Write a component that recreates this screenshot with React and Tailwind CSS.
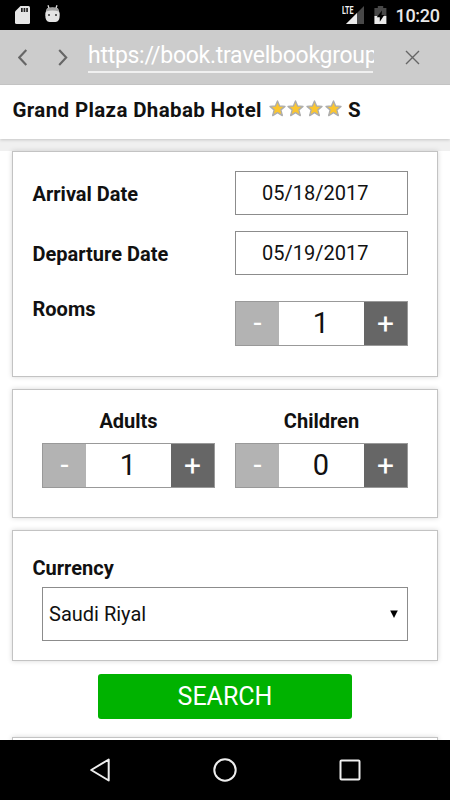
import { useState } from "react";

function StatusBar() {
    return (
        <div className="flex h-[30px] shrink-0 items-start bg-black pl-[15px]">
            <svg className="mt-[6px] h-[18px] w-[15px]" viewBox="0 0 15 18">
                <path
                    d="M5.5 0H13.5Q15 0 15 1.5V16.5Q15 18 13.5 18H1.5Q0 18 0 16.5V5.5Z"
                    fill="#e6e6e6"
                />
                <path d="M6 2h1.7v4H6zM8.6 2h1.7v4H8.6zM11.2 2h1.7v4h-1.7z" fill="#222" />
            </svg>
            <svg className="mt-[5px] ml-[15px] h-[18px] w-[15px]" viewBox="0 0 15 18">
                <path d="M3 0.2L4.3 4M12 0.2L10.7 4" stroke="#ddd" strokeWidth="1.3" />
                <path
                    d="M2 3.5Q7.5 1.6 13 3.5L14.6 8Q15.4 17 10.5 17H4.5Q-0.4 17 0.4 8Z"
                    fill="#e3e3e3"
                />
                <path d="M2 3.5Q7.5 1.6 13 3.5L14 6.4Q7.5 4.8 1 6.4Z" fill="#a3a3a3" />
                <circle cx="4" cy="10" r="1" fill="#333" />
                <circle cx="11" cy="10" r="1" fill="#333" />
            </svg>
            <div className="relative mt-[6px] ml-[282px] h-[18px] w-[22px]">
                <svg className="h-[18px] w-[22px]" viewBox="0 0 22 18">
                    <path d="M22 0V18H4Z" fill="#484848" />
                    <path d="M15 7V18H4Z" fill="#ebebeb" />
                    <path d="M0 0H11.5V8.6H0Z" fill="#000" />
                </svg>
                <svg className="absolute -top-[4px] left-0 h-[18px] w-[14px]" viewBox="0 0 14 18">
                    <text
                        x="0"
                        y="12"
                        fontSize="11"
                        fontWeight="700"
                        fontFamily="Roboto, sans-serif"
                        textLength="11.5"
                        lengthAdjust="spacingAndGlyphs"
                        fill="#f2f2f2"
                    >
                        LTE
                    </text>
                </svg>
            </div>
            <svg className="mt-[6px] ml-[10px] h-[18px] w-[13px]" viewBox="0 0 13 18">
                <path d="M3.8 0H9.2V2H12.4V10H0.4V2H3.8Z" fill="#484848" />
                <path d="M0.4 10H12.4V18H0.4Z" fill="#ebebeb" />
                <path d="M8 4.5L2.7 11.2H5.8V15.8L10.3 9H7.6Z" fill="#000" />
            </svg>
            <span className="mt-[5px] ml-[8.5px] text-[18px] leading-[21px] font-medium tracking-[-0.3px] text-[#e8e8e8]">
                10:20
            </span>
        </div>
    );
}

function BrowserBar() {
    return (
        <div className="flex h-[55px] shrink-0 items-start border-b border-[#c3c3c3] bg-[#ccc]">
            <svg className="mt-[19px] ml-[18px] h-[17px] w-[10px]" viewBox="0 0 10 17">
                <path d="M8.3 1L1.3 8.5L8.3 16" fill="none" stroke="#666" strokeWidth="2.1" />
            </svg>
            <svg className="mt-[19px] ml-[30px] h-[17px] w-[10px]" viewBox="0 0 10 17">
                <path d="M1.2 1L8.2 8.5L1.2 16" fill="none" stroke="#666" strokeWidth="2.1" />
            </svg>
            <div className="mt-[8px] ml-[20px] h-[35px] w-[285px] border-b-2 border-[#f0f0f0]">
                <div className="w-[286px] overflow-hidden text-[23px] leading-[35px] tracking-[-0.28px] whitespace-nowrap text-white">
                    https://book.travelbookgroup
                </div>
            </div>
            <svg className="mt-[20px] ml-[32px] h-[15px] w-[15px]" viewBox="0 0 15 15">
                <path d="M1 1L14 14M14 1L1 14" stroke="#666" strokeWidth="1.4" />
            </svg>
        </div>
    );
}

function Star() {
    return (
        <svg className="h-[17px] w-[17px]" viewBox="0 0 17 17">
            <path
                d="M8.5 1L10.6 6L16 6.4L11.9 9.9L13.3 15.6L8.5 12.6L3.7 15.6L5.1 9.9L1 6.4L6.4 6Z"
                fill="#fbc62f"
                stroke="#adadad"
                strokeWidth="1.4"
                strokeLinejoin="round"
            />
        </svg>
    );
}

function Card({ className, children }) {
    return (
        <section
            className={`mx-[12px] shrink-0 border border-[#c3c3c3] bg-white shadow-[0_0_5px_rgba(0,0,0,0.16)] ${className}`}
        >
            {children}
        </section>
    );
}

function DateField({ value }) {
    return (
        <div className="h-[44px] w-[173px] border border-[#8c8c8c] pl-[26px] text-[20px] leading-[43px] text-[#111]">
            {value}
        </div>
    );
}

function Stepper({ initial, min }) {
    const [count, setCount] = useState(initial);

    return (
        <div className="flex h-[45px] w-[173px] border border-[#999] leading-[43px]">
            <button
                className="w-[43px] bg-[#b3b3b3] text-center text-[29px] text-white"
                onClick={() => setCount(Math.max(min, count - 1))}
            >
                -
            </button>
            <span className="flex-1 pr-[1px] text-center text-[29px] leading-[42px] text-[#111]">
                {count}
            </span>
            <button
                className="w-[43px] bg-[#666] text-center text-[30px] text-white"
                onClick={() => setCount(count + 1)}
            >
                +
            </button>
        </div>
    );
}

function NavBar() {
    return (
        <div className="flex h-[60px] shrink-0 items-center bg-black pl-[89px]">
            <svg className="h-[26px] w-[22px]" viewBox="0 0 22 26">
                <path
                    d="M19.7 2.5V23.5L2.2 13Z"
                    fill="none"
                    stroke="#eee"
                    strokeWidth="2"
                    strokeLinejoin="round"
                />
            </svg>
            <svg className="ml-[101px] h-[26px] w-[26px]" viewBox="0 0 26 26">
                <circle cx="13" cy="13" r="10.7" fill="none" stroke="#eee" strokeWidth="2" />
            </svg>
            <svg className="ml-[101px] h-[22px] w-[22px]" viewBox="0 0 22 22">
                <rect x="1.5" y="1.5" width="19" height="19" rx="1" fill="none" stroke="#eee" strokeWidth="2" />
            </svg>
        </div>
    );
}

export default function App() {
    return (
        <div className="flex h-[800px] w-[450px] flex-col overflow-hidden bg-white font-[Roboto,sans-serif] text-[#111]">
            <StatusBar />
            <BrowserBar />
            <main className="flex min-h-0 flex-1 flex-col overflow-hidden">
                <header className="z-10 flex h-[54px] shrink-0 bg-white pl-[12.5px] text-[20.5px] leading-[51px] font-bold shadow-[0_1px_3px_rgba(0,0,0,0.18)]">
                    <h1 className="w-[250px] tracking-[0.36px] whitespace-nowrap">Grand Plaza Dhabab Hotel</h1>
                    <div className="mt-[15px] ml-[6px] flex gap-[1.8px]">
                        <Star />
                        <Star />
                        <Star />
                        <Star />
                    </div>
                    <span className="ml-[6px]">S</span>
                </header>
                <div className="h-[12px] shrink-0 bg-[#f0f0f0]" />

                <Card className="h-[226px] pt-[19px] pr-[29px] pl-[19.5px]">
                    <div className="flex justify-between">
                        <span className="text-[20px] leading-[47px] font-bold">Arrival Date</span>
                        <DateField value="05/18/2017" />
                    </div>
                    <div className="mt-[13px] flex justify-between">
                        <span className="text-[20px] leading-[47px] font-bold">Departure Date</span>
                        <DateField value="05/19/2017" />
                    </div>
                    <div className="mt-[23px] flex justify-between">
                        <span className="text-[20px] leading-[17px] font-bold">Rooms</span>
                        <Stepper initial={1} min={1} />
                    </div>
                </Card>

                <Card className="mt-[12px] flex h-[129px] justify-between pt-[18px] pr-[29px] pl-[29px]">
                    <div className="text-center">
                        <div className="h-[35px] text-[20px] leading-[26px] font-bold">Adults</div>
                        <Stepper initial={1} min={1} />
                    </div>
                    <div className="text-center">
                        <div className="h-[35px] text-[20px] leading-[26px] font-bold">Children</div>
                        <Stepper initial={0} min={0} />
                    </div>
                </Card>

                <Card className="mt-[12px] h-[131px] pt-[24px] pr-[29px] pl-[19.5px]">
                    <div className="text-[20px] leading-[26px] font-bold">Currency</div>
                    <div className="mt-[6px] ml-[9.5px] flex h-[54px] items-center justify-between border border-[#8c8c8c] pr-[9px] pl-[6px] text-[20px]">
                        Saudi Riyal
                        <svg className="mb-[1px] h-[8px] w-[8px]" viewBox="0 0 8 8">
                            <path d="M0.2 0.5H7.8L4 8Z" fill="#000" />
                        </svg>
                    </div>
                </Card>

                <button className="mt-[13px] ml-[98px] h-[45px] w-[254px] shrink-0 rounded-[3px] bg-[#00b200] text-[25px] leading-[46px] text-white">
                    SEARCH
                </button>
                <Card className="mt-[18px] h-[100px]" />
            </main>
            <NavBar />
        </div>
    );
}
